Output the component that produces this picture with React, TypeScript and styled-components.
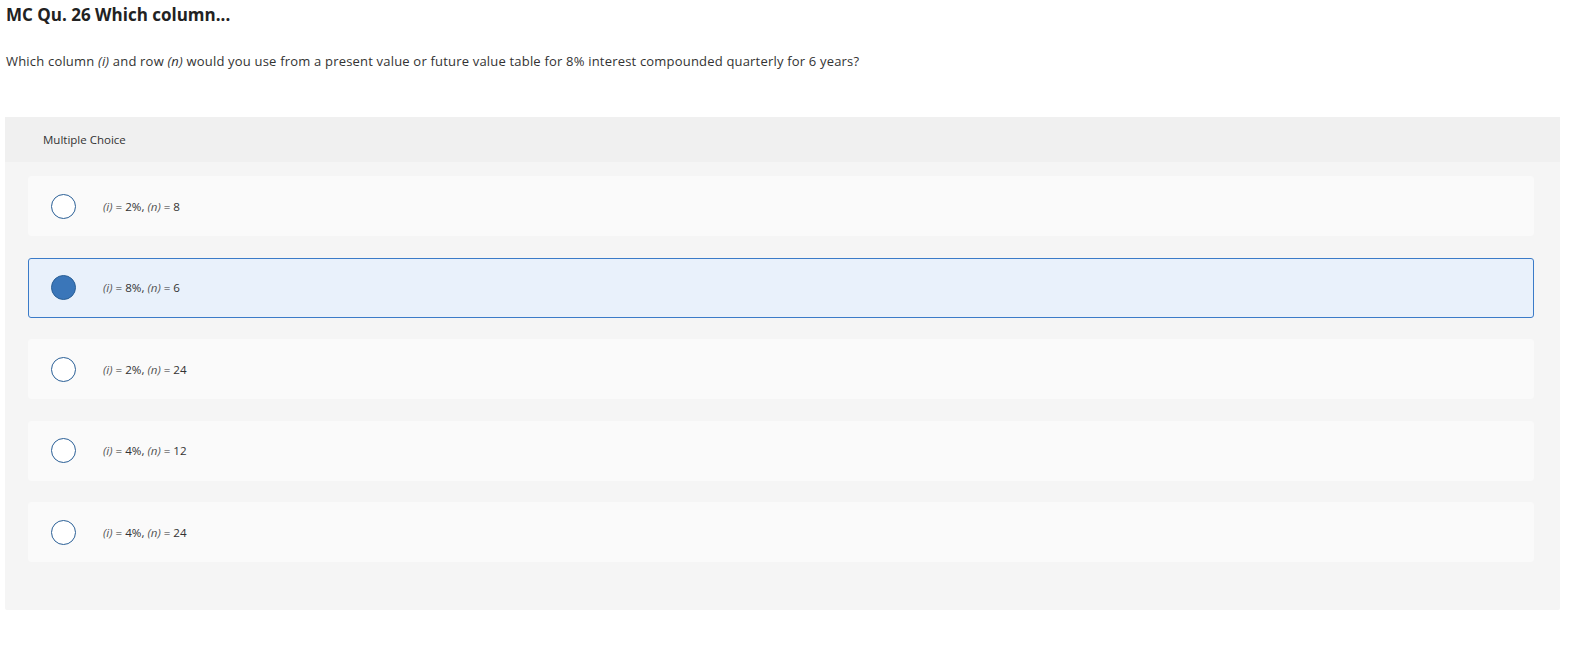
import React from "react";
import styled, { createGlobalStyle } from "styled-components";

const Global = createGlobalStyle`
  html, body { margin: 0; padding: 0; background: #fff; }
  body { font-family: "Open Sans", Lato, Arial, sans-serif; color: #333; }
`;

const Page = styled.div`
  padding: 0 0 0 5px;
`;

const Title = styled.h1`
  margin: 0;
  padding: 4px 0 0 1px;
  font-size: 17px;
  line-height: 22px;
  font-weight: 700;
  color: #222;
`;

const Question = styled.p`
  margin: 0;
  padding: 26px 0 0 1px;
  font-size: 13px;
  line-height: 18px;
  letter-spacing: 0.19px;
  color: #333;
  em { font-style: italic; }
`;

const Panel = styled.section`
  margin-top: 47px;
  width: 1555px;
  background: #f5f5f5;
  border-radius: 2px;
`;

const PanelHeader = styled.div`
  height: 45px;
  display: flex;
  align-items: center;
  padding-left: 38px;
  background: #f0f0f0;
  font-size: 11.5px;
  color: #333;
`;

const Options = styled.div`
  display: flex;
  flex-direction: column;
  gap: 21.5px;
  padding: 14px 26px 48px 23px;
`;

const Option = styled.label<{ $selected?: boolean }>`
  box-sizing: border-box;
  height: 60px;
  display: flex;
  align-items: center;
  padding-left: 22px;
  background: ${(p) => (p.$selected ? "#e9f1fb" : "#fafafa")};
  border: 1px solid ${(p) => (p.$selected ? "#3b7bc8" : "#fafafa")};
  border-radius: 3px;
  cursor: pointer;
`;

const Radio = styled.span<{ $selected?: boolean }>`
  box-sizing: border-box;
  width: 25px;
  height: 25px;
  border-radius: 50%;
  border: 1.5px solid #2a5f96;
  background: ${(p) => (p.$selected ? "#3a76b9" : "#fff")};
  flex: none;
`;

const OptionText = styled.span`
  margin-left: 27px;
  font-size: 11.6px;
  color: #333;
  em { font-style: italic; color: #555; }
`;

const options = [
  { i: "2%", n: "8" },
  { i: "8%", n: "6", selected: true },
  { i: "2%", n: "24" },
  { i: "4%", n: "12" },
  { i: "4%", n: "24" },
];

export default function App() {
  return (
    <Page>
      <Global />
      <Title>MC Qu. 26 Which column...</Title>
      <Question>
        Which column <em>(i)</em> and row <em>(n)</em> would you use from a present value or future value table for 8% interest compounded quarterly for 6 years?
      </Question>
      <Panel>
        <PanelHeader>Multiple Choice</PanelHeader>
        <Options>
          {options.map((o, idx) => (
            <Option key={idx} $selected={o.selected}>
              <Radio $selected={o.selected} />
              <OptionText>
                <em>(i)</em> = {o.i}, <em>(n)</em> = {o.n}
              </OptionText>
            </Option>
          ))}
        </Options>
      </Panel>
    </Page>
  );
}
